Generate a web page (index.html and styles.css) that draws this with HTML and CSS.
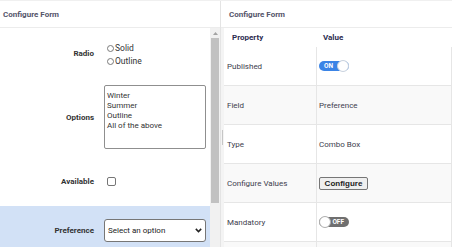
FILE: index.html
```html
<!DOCTYPE html>
<html lang="en">
<head>
<meta charset="utf-8">
<title>Configure Form</title>
<link rel="stylesheet" href="styles.css">
</head>
<body>
<div class="app">
  <section class="panel panel-left">
    <header class="panel-head panel-head-left">Configure Form</header>
    <div class="panel-body">
      <div class="form">
        <div class="field">
          <div class="field-label">Radio</div>
          <div class="field-control radio-group">
            <label class="radio-option"><input type="radio" class="radio" name="style"><span>Solid</span></label>
            <label class="radio-option"><input type="radio" class="radio" name="style"><span>Outline</span></label>
          </div>
        </div>
        <div class="field">
          <div class="field-label">Options</div>
          <div class="field-control">
            <textarea class="options-list" readonly>Winter
Summer
Outline
All of the above</textarea>
          </div>
        </div>
        <div class="field">
          <div class="field-label">Available</div>
          <div class="field-control">
            <input type="checkbox" class="check">
          </div>
        </div>
        <div class="field field-active field-last">
          <div class="field-label">Preference</div>
          <div class="field-control">
            <div class="select">
              <span>Select an option</span>
              <svg class="chevron" width="7" height="5" viewBox="0 0 7 5"><path d="M0.8 0.9 L3.5 3.6 L6.2 0.9" fill="none" stroke="#222" stroke-width="1.5"/></svg>
            </div>
          </div>
        </div>
      </div>
      <div class="scrollbar">
        <div class="sb-btn"><svg width="5" height="3" viewBox="0 0 5 3"><polygon points="0,3 2.5,0 5,3" fill="#a3a3a3"/></svg></div>
        <div class="sb-thumb"></div>
      </div>
    </div>
  </section>
  <div class="splitter">
    <div class="splitter-top"></div>
    <div class="splitter-track"><span class="grip"></span></div>
  </div>
  <section class="panel panel-right">
    <header class="panel-head panel-head-right">Configure Form</header>
    <div class="table-wrap">
      <table class="props">
        <thead>
          <tr><th class="col-prop">Property</th><th class="col-val">Value</th></tr>
        </thead>
        <tbody>
          <tr>
            <td class="cell-prop">Published</td>
            <td class="cell-val"><span class="toggle toggle-on"><span class="toggle-text">ON</span><span class="knob"></span></span></td>
          </tr>
          <tr>
            <td class="cell-prop">Field</td>
            <td class="cell-val">Preference</td>
          </tr>
          <tr>
            <td class="cell-prop">Type</td>
            <td class="cell-val">Combo Box</td>
          </tr>
          <tr>
            <td class="cell-prop">Configure Values</td>
            <td class="cell-val"><button class="btn">Configure</button></td>
          </tr>
          <tr>
            <td class="cell-prop">Mandatory</td>
            <td class="cell-val"><span class="toggle toggle-off"><span class="knob"></span><span class="toggle-text">OFF</span></span></td>
          </tr>
          <tr class="row-tail">
            <td class="cell-prop"></td>
            <td class="cell-val"></td>
          </tr>
        </tbody>
      </table>
    </div>
  </section>
</div>
</body>
</html>
```
FILE: styles.css
```css
* { box-sizing: border-box; }
html, body { margin: 0; padding: 0; }
body {
  width: 452px;
  height: 247px;
  overflow: hidden;
  background: #fff;
  color: #333;
  font-family: Roboto, "Liberation Sans", Arial, sans-serif;
  font-size: 8px;
}
.app {
  display: flex;
  height: 247px;
  overflow: hidden;
  border-top: 1px solid #f0f0f0;
}
.panel {
  display: flex;
  flex-direction: column;
  min-width: 0;
  min-height: 0;
  overflow: hidden;
}
.panel-left {
  width: 221px;
  flex: none;
  border-right: 1px solid #e4e4e4;
}
.panel-right { flex: 1; }
.panel-head {
  flex: none;
  height: 27px;
  display: flex;
  align-items: center;
  font-weight: 700;
  color: #55556a;
  border-bottom: 1px solid #ececec;
}
.panel-head-left { padding-left: 3px; }
.panel-head-right { padding-left: 5px; }

.panel-body {
  flex: 1;
  min-height: 0;
  display: flex;
  overflow: hidden;
}
.form {
  width: 210px;
  flex: none;
  display: flex;
  flex-direction: column;
  overflow: hidden;
}
.field {
  display: flex;
  align-items: center;
  min-height: 50px;
  padding: 7px 0;
  flex: none;
}
.field-last {
  flex: 1;
  min-height: 0;
  align-items: flex-start;
  padding-top: 13px;
}
.field-last .field-label { line-height: 23px; }
.field-active { background: #d2e1f6; }
.field-label {
  width: 94px;
  flex: none;
  text-align: right;
  font-weight: 700;
  color: #333;
}
.field-control { margin-left: 10px; display: flex; }

.radio-group {
  flex-direction: column;
  margin-top: 3px;
}
.radio-option {
  display: flex;
  align-items: center;
  height: 13px;
  line-height: 13px;
  color: #333;
  font-size: 8.5px;
}
.radio {
  appearance: none;
  -webkit-appearance: none;
  width: 7px;
  height: 7px;
  margin: 0 1px 0 3px;
  border: 1px solid #7a7a7a;
  border-radius: 50%;
  background: #fff;
}
.options-list {
  display: block;
  width: 102px;
  height: 64px;
  margin: 0;
  padding: 5px 2px;
  border: 1px solid #8f8f8f;
  border-radius: 2px;
  font-family: Roboto, "Liberation Sans", Arial, sans-serif;
  font-size: 8px;
  line-height: 10px;
  color: #333;
  resize: none;
  overflow: hidden;
  background: #fff;
}
.check {
  appearance: none;
  -webkit-appearance: none;
  width: 9px;
  height: 9px;
  margin: 0 0 0 3px;
  border: 1px solid #767676;
  border-radius: 2px;
  background: #fff;
}
.select {
  width: 102px;
  height: 23px;
  display: flex;
  align-items: center;
  justify-content: space-between;
  padding: 0 3px 0 3px;
  border: 1px solid #767676;
  border-radius: 3px;
  background: #fff;
  color: #222;
}
.chevron { display: block; }

.scrollbar {
  width: 10px;
  flex: none;
  background: #f1f1f1;
  display: flex;
  flex-direction: column;
}
.sb-btn {
  height: 10px;
  display: flex;
  align-items: center;
  justify-content: center;
}
.sb-btn svg { display: block; }
.sb-thumb {
  height: 165px;
  margin: 0 1px;
  background: #c1c1c1;
}

.splitter {
  width: 3px;
  flex: none;
  display: flex;
  flex-direction: column;
}
.splitter-top {
  height: 27px;
  flex: none;
  background: #fff;
  border-bottom: 1px solid #ececec;
}
.splitter-track {
  flex: 1;
  background: #f4f4f4;
  display: flex;
  align-items: center;
  justify-content: center;
}
.grip {
  width: 1px;
  height: 15px;
  background: #c6c6c6;
}

.table-wrap {
  flex: 1;
  min-height: 0;
  overflow: hidden;
}
.props {
  width: 100%;
  table-layout: fixed;
  border-collapse: separate;
  border-spacing: 0;
  font-size: 8px;
}
.props thead tr { height: 19px; }
.props th {
  text-align: left;
  font-weight: 700;
  color: #2c2c50;
  padding: 0;
  vertical-align: middle;
}
.col-prop { width: 93px; padding-left: 8px !important; }
.col-val { padding-left: 6px !important; }
.props tbody tr { height: 39px; }
.props tbody tr.row-tail { height: 6px; }
.props td {
  padding: 0;
  vertical-align: middle;
  color: #40404e;
  border-bottom: 1px solid #e6e6e6;
  white-space: nowrap;
}
.props tr.row-tail td { border-bottom: 0; }
.props tbody tr:nth-child(even) td { background: #f9f9f9; }
.cell-prop {
  padding-left: 3px !important;
  border-right: 1px solid #e6e6e6;
}
.cell-val {
  padding-left: 2px !important;
  border-right: 1px solid #e6e6e6;
}

.toggle {
  display: inline-flex;
  align-items: center;
  width: 30px;
  height: 10px;
  border-radius: 5px;
  vertical-align: middle;
  font-size: 6.5px;
  font-weight: 700;
  color: #fff;
  line-height: 10px;
}
.toggle-on {
  background: #3b84e6;
  justify-content: space-between;
  padding-left: 5px;
}
.toggle-off {
  background: #6f6f6f;
  justify-content: space-between;
  padding-right: 5px;
}
.knob {
  width: 12px;
  height: 12px;
  flex: none;
  border-radius: 50%;
  background: #fff;
  border: 1px solid #c9d2de;
}
.toggle-off .knob { border-color: #b0b0b0; }

.btn {
  width: 49px;
  height: 13px;
  padding: 0;
  margin: 0;
  font-family: "Liberation Sans", Arial, sans-serif;
  font-size: 8px;
  font-weight: 700;
  color: #222;
  background: #efefef;
  border: 1px solid #767676;
  border-radius: 2px;
  vertical-align: middle;
  line-height: 11px;
}
```
